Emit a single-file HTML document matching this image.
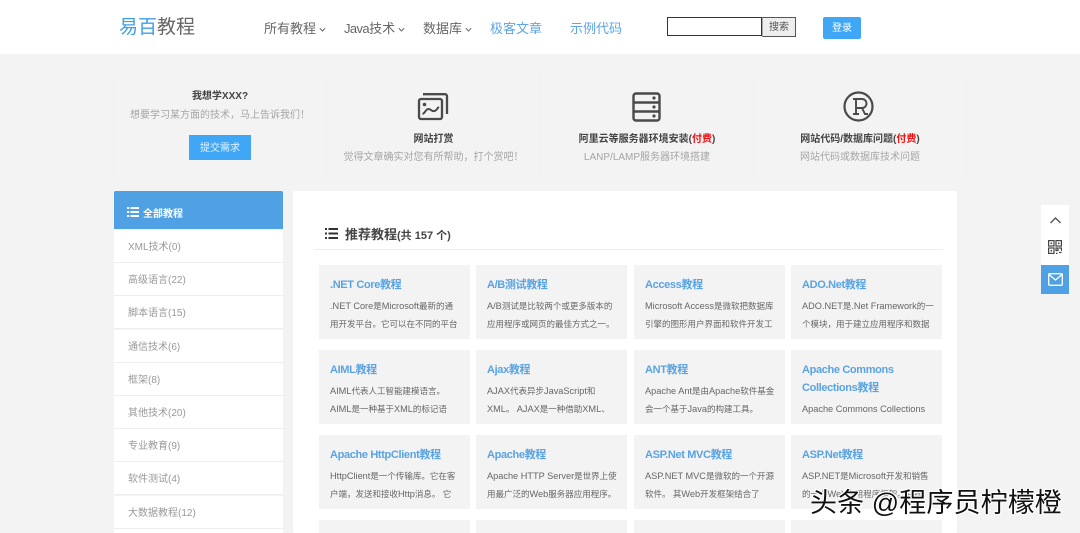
<!DOCTYPE html>
<html><head><meta charset="utf-8">
<style>
html,body{margin:0;padding:0;width:1080px;height:533px;overflow:hidden;background:#f3f3f3}
body{position:relative;font-family:"Liberation Sans","Noto Sans CJK SC",sans-serif;color:#555;filter:blur(.25px)}
div,a{white-space:nowrap}
.a{position:absolute}
.nav{position:absolute;top:20px;font-size:13px;line-height:18px;color:#666}
.chev{position:absolute;top:26px;width:7px;height:7px}
.h{position:absolute;font-size:10px;font-weight:bold;color:#444;line-height:14px;text-align:center}
.s{position:absolute;font-size:10px;color:#a5a5a5;line-height:14px;text-align:center}
.vl{position:absolute;top:76px;width:1px;height:98px;background:#efefef}
.side{position:absolute;left:114px;width:169px;height:32px;background:#fff;border-bottom:1px solid #eee;font-size:10px;color:#999;line-height:35px;text-indent:14px;overflow:hidden}
.card{position:absolute;width:151px;height:74px;background:#f3f3f3;overflow:hidden}
.card b{position:absolute;left:11px;top:12px;font-size:11px;line-height:17.5px;letter-spacing:-.35px;color:#5aa3e2;font-weight:bold;white-space:normal;width:135px}
.card p{position:absolute;left:11px;margin:0;font-size:8.5px;line-height:18px;color:#666;white-space:nowrap}
.card p.l1{top:32px}.card p.l2{top:50px}
.card i{font-style:normal;font-size:9.2px}
.last{height:13px}
</style></head><body>

<div class="a" style="left:0;top:0;width:1080px;height:54px;background:#fff"></div>
<div class="a" style="left:119px;top:15px;font-size:19px;line-height:26px;color:#666"><span style="color:#3f9fe8">易百</span>教程</div>

<div class="nav" style="left:264px">所有教程</div>
<svg class="chev" style="left:319px" viewBox="0 0 7 7"><path d="M.8 2.2 3.5 5 6.200 2.2" fill="none" stroke="#666" stroke-width="1"/></svg>
<div class="nav" style="left:344px"><span style="letter-spacing:-.6px">Java</span>技术</div>
<svg class="chev" style="left:398px" viewBox="0 0 7 7"><path d="M.8 2.2 3.5 5 6.200 2.2" fill="none" stroke="#666" stroke-width="1"/></svg>
<div class="nav" style="left:423px">数据库</div>
<svg class="chev" style="left:465px" viewBox="0 0 7 7"><path d="M.8 2.2 3.5 5 6.200 2.2" fill="none" stroke="#666" stroke-width="1"/></svg>
<div class="nav" style="left:490px;color:#5ea6e6">极客文章</div>
<div class="nav" style="left:570px;color:#5ea6e6">示例代码</div>

<div class="a" style="left:667px;top:17px;width:93px;height:17px;border:1px solid #333;background:#fff"></div>
<div class="a" style="left:762px;top:17px;width:32px;height:18px;border:1px solid #555;border-left:1px solid #aaa;background:#eee;font-size:10px;line-height:20px;text-align:center;color:#555;overflow:hidden">搜索</div>
<div class="a" style="left:823px;top:17px;width:38px;height:22px;border-radius:2px;background:#3fa7f5;color:#fff;font-size:10px;line-height:24px;text-align:center;overflow:hidden">登录</div>

<div class="vl" style="left:113px"></div><div class="vl" style="left:326px"></div><div class="vl" style="left:540px"></div><div class="vl" style="left:753px"></div><div class="vl" style="left:966px"></div>

<div class="h" style="left:114px;width:212px;top:90px">我想学XXX?</div>
<div class="s" style="left:114px;width:212px;top:109px">想要学习某方面的技术，马上告诉我们！</div>
<div class="a" style="left:189px;top:135px;width:62px;height:25px;background:#3fa7f5;color:#e8f4ff;font-size:10px;line-height:27px;text-align:center;overflow:hidden">提交需求</div>

<svg class="a" style="left:417px;top:92px" width="32" height="29" viewBox="0 0 32 29" fill="none" stroke="#4a4a4a" stroke-width="2.300"><rect x="2" y="7" width="23" height="20" rx="2"/><path d="M6 2.200H28a2 2 0 0 1 2 2V22"/><circle cx="7.500" cy="12.500" r="1.800" fill="#4a4a4a" stroke="none"/><path d="M5.500 22c3-1 3-5 6-5s3 3 6 2 2.500-3 4.500-4" stroke-width="2"/></svg>
<div class="h" style="left:327px;width:213px;top:133px">网站打赏</div>
<div class="s" style="left:327px;width:213px;top:151px">觉得文章确实对您有所帮助，打个赏吧！</div>

<svg class="a" style="left:632px;top:92px" width="29" height="30" viewBox="0 0 29 30" fill="none" stroke="#4a4a4a" stroke-width="2.400"><rect x="1.500" y="1.500" width="26" height="27" rx="2.500"/><path d="M1.500 10.500h26M1.500 19.500h26"/><g fill="#4a4a4a" stroke="none"><circle cx="22" cy="6" r="1.600"/><circle cx="22" cy="15" r="1.600"/><circle cx="22" cy="24" r="1.600"/></g></svg>
<div class="h" style="left:541px;width:212px;top:133px">阿里云等服务器环境安装(<span style="color:#f01010">付费</span>)</div>
<div class="s" style="left:541px;width:212px;top:151px">LANP/LAMP服务器环境搭建</div>

<svg class="a" style="left:843px;top:91px" width="31" height="31" viewBox="0 0 31 31" fill="none" stroke="#4a4a4a"><circle cx="15.500" cy="15.500" r="14" stroke-width="2.200"/><path d="M10 8h9a4.500 4.500 0 0 1 0 9h-6M13 8v15M10 23h6M19 17l3 6h3" stroke-width="1.900"/></svg>
<div class="h" style="left:754px;width:212px;top:133px">网站代码/数据库问题(<span style="color:#f01010">付费</span>)</div>
<div class="s" style="left:754px;width:212px;top:151px">网站代码或数据库技术问题</div>

<div class="a" style="left:114px;top:191px;width:169px;height:38px;background:#4fa1e3;border-radius:2px 2px 0 0"></div>
<svg class="a" style="left:127px;top:207px" width="12" height="10" viewBox="0 0 12 10" fill="#fff"><path d="M0 0h2.200v2H0zM3.500 0H12v2H3.500zM0 4h2.200v2H0zM3.500 4H12v2H3.500zM0 8h2.200v2H0zM3.500 8H12v2H3.500z"/></svg>
<div class="a" style="left:143px;top:208px;font-size:10px;line-height:14px;color:#fff;font-weight:bold">全部教程</div>

<div class="side" style="top:230px">XML技术(0)</div>
<div class="side" style="top:263px">高级语言(22)</div>
<div class="side" style="top:296px">脚本语言(15)</div>
<div class="side" style="top:330px">通信技术(6)</div>
<div class="side" style="top:363px">框架(8)</div>
<div class="side" style="top:396px">其他技术(20)</div>
<div class="side" style="top:429px">专业教育(9)</div>
<div class="side" style="top:462px">软件测试(4)</div>
<div class="side" style="top:496px">大数据教程(12)</div>
<div class="side" style="top:529px;height:4px;border:0"></div>

<div class="a" style="left:293px;top:191px;width:664px;height:342px;background:#fff;border-radius:2px"></div>
<svg class="a" style="left:325px;top:228px" width="13" height="11" viewBox="0 0 13 11" fill="#333"><path d="M0 0h2v2H0zM3.500 0H13v2H3.500zM0 4.500h2v2H0zM3.500 4.500H13v2H3.500zM0 9h2v2H0zM3.500 9H13v2H3.500z"/></svg>
<div class="a" style="left:345px;top:226px;font-size:13px;line-height:18px;font-weight:bold;color:#444">推荐教程<span style="font-size:11px">(共 157 个)</span></div>
<div class="a" style="left:314px;top:249px;width:629px;height:1px;background:#eee"></div>

<div class="card" style="left:319px;top:265px"><b>.NET Core教程</b><p class="l1"><i>.NET Core</i>是<i>Microsoft</i>最新的通</p><p class="l2">用开发平台。它可以在不同的平台</p></div>
<div class="card" style="left:476px;top:265px"><b>A/B测试教程</b><p class="l1"><i>A/B</i>测试是比较两个或更多版本的</p><p class="l2">应用程序或网页的最佳方式之一。</p></div>
<div class="card" style="left:634px;top:265px"><b>Access教程</b><p class="l1"><i>Microsoft Access</i>是微软把数据库</p><p class="l2">引擎的图形用户界面和软件开发工</p></div>
<div class="card" style="left:791px;top:265px"><b>ADO.Net教程</b><p class="l1"><i>ADO.NET</i>是<i>.Net Framework</i>的一</p><p class="l2">个模块，用于建立应用程序和数据</p></div>

<div class="card" style="left:319px;top:350px"><b>AIML教程</b><p class="l1"><i>AIML</i>代表人工智能建模语言。</p><p class="l2"><i>AIML</i>是一种基于<i>XML</i>的标记语</p></div>
<div class="card" style="left:476px;top:350px"><b>Ajax教程</b><p class="l1"><i>AJAX</i>代表异步<i>JavaScript</i>和</p><p class="l2"><i>XML</i>。 <i>AJAX</i>是一种借助<i>XML</i>、</p></div>
<div class="card" style="left:634px;top:350px"><b>ANT教程</b><p class="l1"><i>Apache Ant</i>是由<i>Apache</i>软件基金</p><p class="l2">会一个基于<i>Java</i>的构建工具。</p></div>
<div class="card" style="left:791px;top:350px"><b>Apache Commons Collections教程</b><p class="l2"><i>Apache Commons Collections</i></p></div>

<div class="card" style="left:319px;top:435px"><b>Apache HttpClient教程</b><p class="l1"><i>HttpClient</i>是一个传输库。它在客</p><p class="l2">户端，发送和接收<i>Http</i>消息。 它</p></div>
<div class="card" style="left:476px;top:435px"><b>Apache教程</b><p class="l1"><i>Apache HTTP Server</i>是世界上使</p><p class="l2">用最广泛的<i>Web</i>服务器应用程序。</p></div>
<div class="card" style="left:634px;top:435px"><b>ASP.Net MVC教程</b><p class="l1"><i>ASP.NET MVC</i>是微软的一个开源</p><p class="l2">软件。 其<i>Web</i>开发框架结合了</p></div>
<div class="card" style="left:791px;top:435px"><b>ASP.Net教程</b><p class="l1"><i>ASP.NET</i>是<i>Microsoft</i>开发和销售</p><p class="l2">的一个<i>Web</i>应用程序框架。它提</p></div>

<div class="card last" style="left:319px;top:520px"></div>
<div class="card last" style="left:476px;top:520px"></div>
<div class="card last" style="left:634px;top:520px"></div>
<div class="card last" style="left:791px;top:520px"></div>

<div class="a" style="left:1041px;top:205px;width:28px;height:60px;background:#fff"></div>
<svg class="a" style="left:1049px;top:216px" width="13" height="9" viewBox="0 0 13 9"><path d="M1.500 7 6.500 2l5 5" fill="none" stroke="#555" stroke-width="1.400"/></svg>
<svg class="a" style="left:1048px;top:240px" width="14" height="14" viewBox="0 0 14 14" fill="none" stroke="#444" stroke-width="1.200"><rect x=".6" y=".6" width="5.400" height="5.400"/><rect x="8" y=".6" width="5.400" height="5.400"/><rect x=".6" y="8" width="5.400" height="5.400"/><path d="M8 8h2v2.500H8zM11 8h2.500v3M8 13.400h1.500M11 12.500h2.500"/><rect x="2.500" y="2.500" width="1.600" height="1.600" fill="#444" stroke="none"/><rect x="9.900" y="2.500" width="1.600" height="1.600" fill="#444" stroke="none"/><rect x="2.500" y="9.900" width="1.600" height="1.600" fill="#444" stroke="none"/></svg>
<div class="a" style="left:1041px;top:265px;width:28px;height:29px;background:#4fa1e3"></div>
<svg class="a" style="left:1048px;top:273px" width="15" height="13" viewBox="0 0 15 13" fill="none" stroke="#fff" stroke-width="1.300"><rect x=".7" y=".7" width="13.600" height="11.600" rx="1"/><path d="M1 1.500 7.500 7 14 1.500"/></svg>

<div class="a" style="left:810px;top:487px;height:32px;font-size:27px;line-height:32px;letter-spacing:.1px;color:#111;text-shadow:1px 0 0 #fff,-1px 0 0 #fff,0 1px 0 #fff,0 -1px 0 #fff,1px 1px 0 #fff,-1px -1px 0 #fff,1px -1px 0 #fff,-1px 1px 0 #fff">头条 @程序员柠檬橙</div>
</body></html>
